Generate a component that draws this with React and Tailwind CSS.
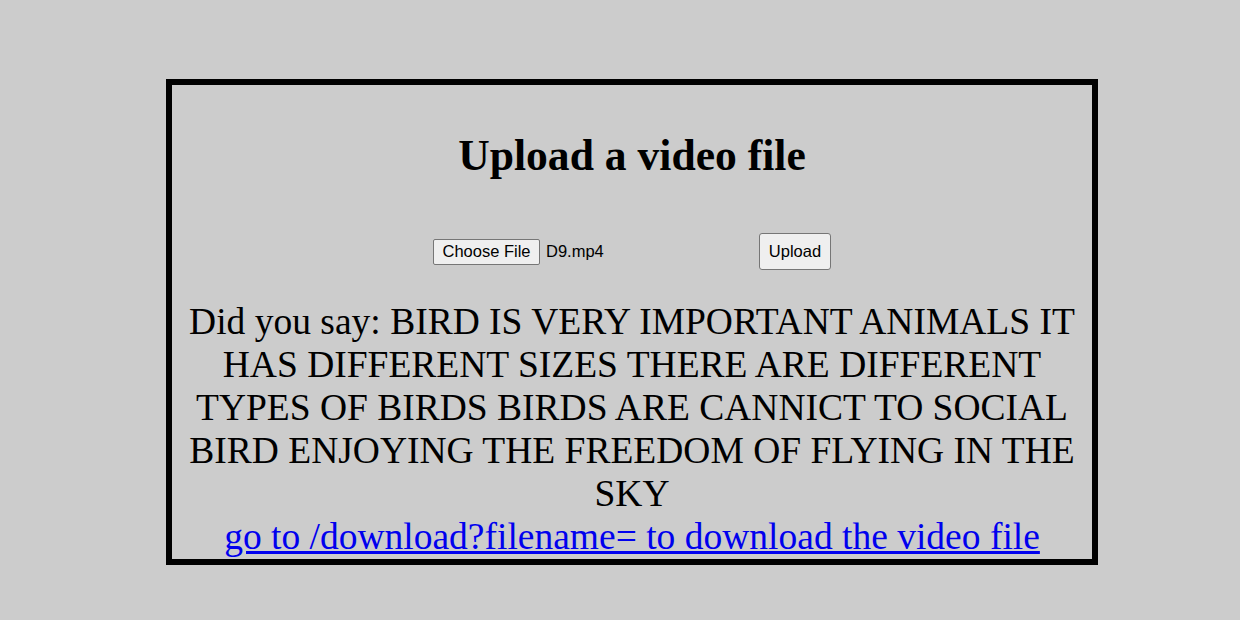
export default function App() {
  return (
    <div className="min-h-[620px] w-full bg-[#cccccc] pt-[79px]" style={{ fontFamily: '"Liberation Serif", "Times New Roman", serif' }}>
      <div className="ml-[166px] box-border h-[486px] w-[932px] border-[6px] border-black text-black">
        <h1 className="mt-[45px] text-center text-[43.6px] font-bold leading-[50px]">Upload a video file</h1>
        <div className="mt-[53px] flex h-[37px] items-center justify-center" style={{ fontFamily: '"Liberation Sans", Arial, sans-serif' }}>
          <div className="flex w-[326px] items-center">
            <span className="box-border flex h-[26px] w-[107px] items-center justify-center rounded-[2px] border border-[#767676] bg-[#efefef] text-[16.5px] leading-none">Choose File</span>
            <span className="ml-[6px] text-[16.5px] leading-none">D9.mp4</span>
          </div>
          <span className="box-border flex h-[37px] w-[72px] items-center justify-center rounded-[3px] border border-[#767676] bg-[#efefef] text-[16.5px] leading-none">Upload</span>
        </div>
        <div className="mt-[30px] px-[10px] text-center text-[37.5px] leading-[43px]">
          <p>Did you say: BIRD IS VERY IMPORTANT ANIMALS IT HAS DIFFERENT SIZES THERE ARE DIFFERENT TYPES OF BIRDS BIRDS ARE CANNICT TO SOCIAL BIRD ENJOYING THE FREEDOM OF FLYING IN THE SKY</p>
          <a href="#" className="text-[#0000ee] underline">go to /download?filename= to download the video file</a>
        </div>
      </div>
    </div>
  );
}
